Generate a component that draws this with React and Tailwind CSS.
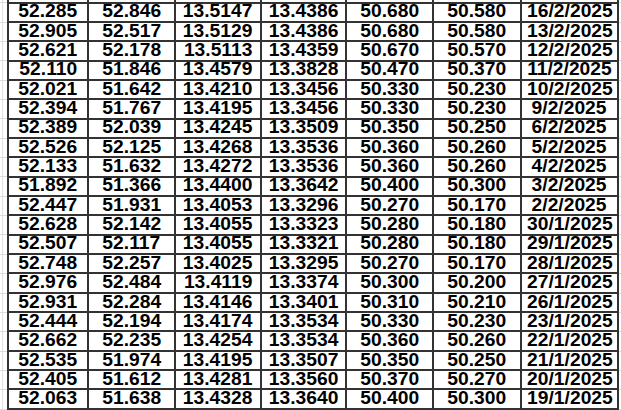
import React from 'react';

const rows = [
  ['52.277', '52.867', '13.5147', '13.4386', '50.680', '50.580', '17/2/2025'],
  ['52.285', '52.846', '13.5147', '13.4386', '50.680', '50.580', '16/2/2025'],
  ['52.905', '52.517', '13.5129', '13.4386', '50.680', '50.580', '13/2/2025'],
  ['52.621', '52.178', '13.5113', '13.4359', '50.670', '50.570', '12/2/2025'],
  ['52.110', '51.846', '13.4579', '13.3828', '50.470', '50.370', '11/2/2025'],
  ['52.021', '51.642', '13.4210', '13.3456', '50.330', '50.230', '10/2/2025'],
  ['52.394', '51.767', '13.4195', '13.3456', '50.330', '50.230', '9/2/2025'],
  ['52.389', '52.039', '13.4245', '13.3509', '50.350', '50.250', '6/2/2025'],
  ['52.526', '52.125', '13.4268', '13.3536', '50.360', '50.260', '5/2/2025'],
  ['52.133', '51.632', '13.4272', '13.3536', '50.360', '50.260', '4/2/2025'],
  ['51.892', '51.366', '13.4400', '13.3642', '50.400', '50.300', '3/2/2025'],
  ['52.447', '51.931', '13.4053', '13.3296', '50.270', '50.170', '2/2/2025'],
  ['52.628', '52.142', '13.4055', '13.3323', '50.280', '50.180', '30/1/2025'],
  ['52.507', '52.117', '13.4055', '13.3321', '50.280', '50.180', '29/1/2025'],
  ['52.748', '52.257', '13.4025', '13.3295', '50.270', '50.170', '28/1/2025'],
  ['52.976', '52.484', '13.4119', '13.3374', '50.300', '50.200', '27/1/2025'],
  ['52.931', '52.284', '13.4146', '13.3401', '50.310', '50.210', '26/1/2025'],
  ['52.444', '52.194', '13.4174', '13.3534', '50.330', '50.230', '23/1/2025'],
  ['52.662', '52.235', '13.4254', '13.3534', '50.360', '50.260', '22/1/2025'],
  ['52.535', '51.974', '13.4195', '13.3507', '50.350', '50.250', '21/1/2025'],
  ['52.405', '51.612', '13.4281', '13.3560', '50.370', '50.270', '20/1/2025'],
  ['52.063', '51.638', '13.4328', '13.3640', '50.400', '50.300', '19/1/2025'],
];

const RateTable = () => {
  return (
    <div className="w-[621px] h-[410px] overflow-hidden bg-white font-['Liberation_Sans',Arial,sans-serif] font-bold text-black">
      <div className="mt-[-16px]">
        {rows.map((row, i) => (
          <div key={i} className="flex h-[19.35px]">
            <div className="w-[7px] border-b border-[#dcdcdc] relative">
              <div className="absolute left-[2px] top-0 bottom-0 w-px bg-[#e2e2e2]" />
            </div>
            <div className="grid grid-cols-[80px_87px_86px_85px_87px_88px_97px] border-l-2 border-[#333]">
              {row.map((val, j) => (
                <div
                  key={j}
                  className="flex items-center justify-center border-r-2 border-b-2 border-[#333] text-[17.5px] leading-none"
                >
                  <span className="inline-block scale-x-[1.1]">{val}</span>
                </div>
              ))}
            </div>
            <div className="flex-1 border-b border-[#dcdcdc]" />
          </div>
        ))}
      </div>
    </div>
  );
};

export default function App() {
  return <RateTable />;
}
